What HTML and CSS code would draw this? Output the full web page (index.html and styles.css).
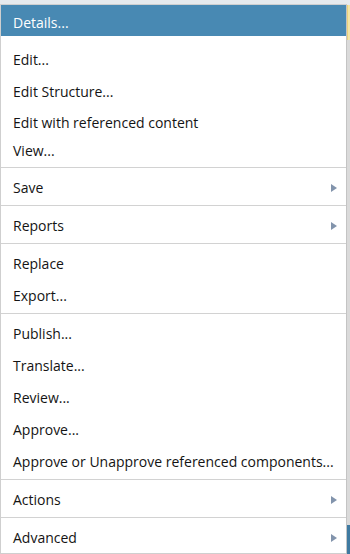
FILE: index.html
```html
<!DOCTYPE html>
<html lang="en">
<head>
  <meta charset="UTF-8">
  <meta name="viewport" content="width=device-width, initial-scale=1.0">
  <title>Context Menu</title>
  <link rel="stylesheet" href="styles.css">
</head>
<body>
  <div class="screen">
    <div class="menu">
      <div class="item active">Details...</div>

      <div class="group group-first">
        <div class="item">Edit...</div>
        <div class="item">Edit Structure...</div>
        <div class="item short">Edit with referenced content</div>
        <div class="item">View...</div>
      </div>

      <div class="group">
        <div class="item">Save <span class="arrow"></span></div>
      </div>

      <div class="group">
        <div class="item">Reports <span class="arrow"></span></div>
      </div>

      <div class="group">
        <div class="item">Replace</div>
        <div class="item">Export...</div>
      </div>

      <div class="group">
        <div class="item">Publish...</div>
        <div class="item">Translate...</div>
        <div class="item">Review...</div>
        <div class="item">Approve...</div>
        <div class="item">Approve or Unapprove referenced components...</div>
      </div>

      <div class="group">
        <div class="item">Actions <span class="arrow"></span></div>
      </div>

      <div class="group group-last">
        <div class="item">Advanced <span class="arrow"></span></div>
      </div>
    </div>

    <div class="edge">
      <div class="edge-top"></div>
      <div class="edge-fill"></div>
      <div class="edge-bottom"></div>
    </div>
  </div>
</body>
</html>
```

FILE: styles.css
```css
* {
  margin: 0;
  padding: 0;
  box-sizing: border-box;
}

body {
  font-family: 'Open Sans', 'Liberation Sans', sans-serif;
  font-size: 14px;
  color: #141414;
  background-color: #e6eaed;
  width: 350px;
  height: 554px;
  overflow: hidden;
}

.screen {
  display: flex;
  height: 554px;
  padding-top: 4px;
}

.menu {
  width: 347px;
  background-color: #fff;
  border: 1px solid #cfcfcf;
  border-right-color: #c4c4c4;
  border-bottom: none;
  display: flex;
  flex-direction: column;
}

.item {
  display: flex;
  align-items: center;
  justify-content: space-between;
  height: 32px;
  padding: 3px 9px 0 12px;
  white-space: nowrap;
}

.item.short {
  height: 27px;
  padding-top: 5px;
}

.item.active {
  height: 31px;
  background-color: #4889b3;
  color: #fff;
}

.group {
  border-top: 1px solid #d2d2d2;
  padding: 2px 0 3px;
}

.group-first {
  border-top: none;
  padding-top: 6px;
  padding-bottom: 2px;
}

.group-last {
  flex: 1;
  padding-bottom: 0;
  border-bottom: 1px solid #cfcfcf;
}

.arrow {
  width: 0;
  height: 0;
  border-top: 4.5px solid transparent;
  border-bottom: 4.5px solid transparent;
  border-left: 6px solid #8294ac;
}

.edge {
  width: 3px;
  display: flex;
  flex-direction: column;
  margin-top: 1px;
}

.edge-top {
  height: 35px;
  background-color: #f3e4a6;
  border-left: 1px solid #e8d27c;
}

.edge-fill {
  flex: 1;
  background-color: #dadada;
}

.edge-bottom {
  height: 29px;
  background-color: #3f7aa1;
}
```
